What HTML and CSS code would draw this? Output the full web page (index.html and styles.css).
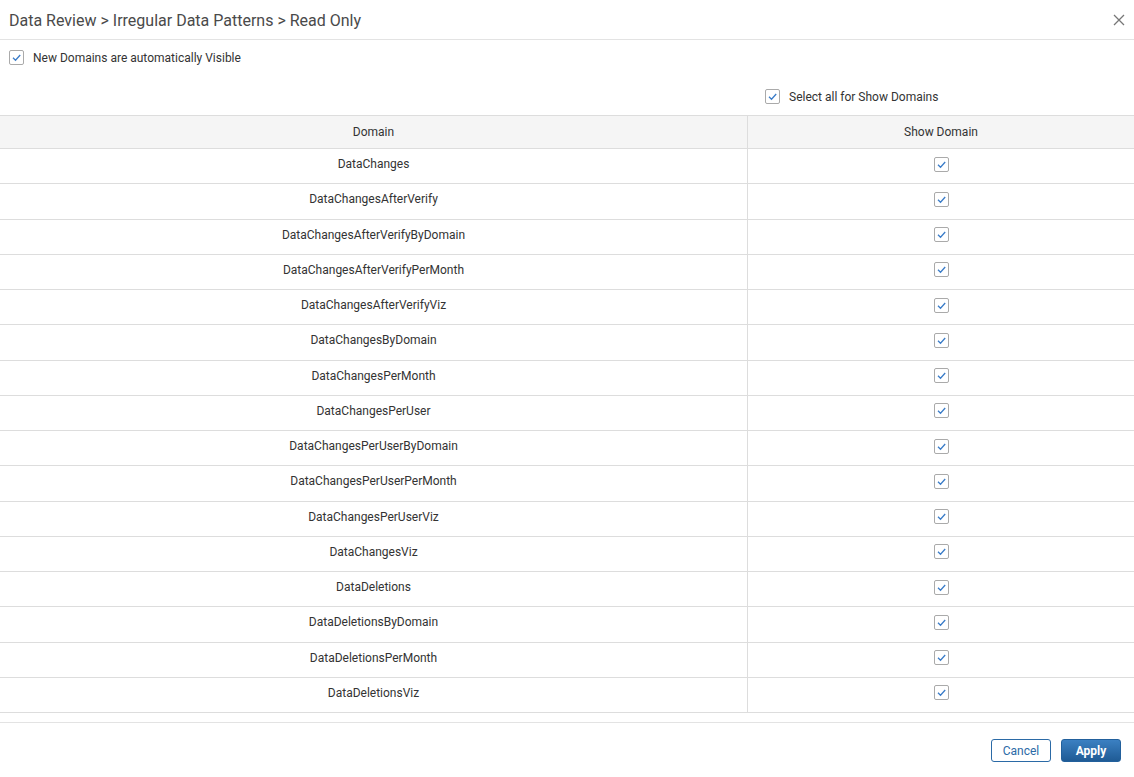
FILE: index.html
```html
<!DOCTYPE html>
<html>
<head>
<meta charset="utf-8">
<link rel="stylesheet" href="styles.css">
</head>
<body>
<div class="dialog">
  <div class="header">
    <div class="title">Data Review &gt; Irregular Data Patterns &gt; Read Only</div>
    <svg class="close" width="12" height="12" viewBox="0 0 12 12"><path d="M1 1 L11 11 M11 1 L1 11" stroke="#777" stroke-width="1.3" fill="none"/></svg>
  </div>
  <div class="opt">
    <span class="cb"><svg width="13" height="13" viewBox="0 0 13 13"><path d="M3 6.8 L5.5 9.2 L10.2 4" stroke="#3a7cc8" stroke-width="1.3" fill="none"/></svg></span>
    <span>New Domains are automatically Visible</span>
  </div>
  <div class="selall">
    <span class="cb"><svg width="13" height="13" viewBox="0 0 13 13"><path d="M3 6.8 L5.5 9.2 L10.2 4" stroke="#3a7cc8" stroke-width="1.3" fill="none"/></svg></span>
    <span>Select all for Show Domains</span>
  </div>
  <div class="table">
    <div class="row head"><div class="c1">Domain</div><div class="c2">Show Domain</div></div>
    <div id="rows"></div>
  </div>
  <div class="footer">
    <button class="btn cancel">Cancel</button>
    <button class="btn apply">Apply</button>
  </div>
</div>
<script>
var names=["DataChanges","DataChangesAfterVerify","DataChangesAfterVerifyByDomain","DataChangesAfterVerifyPerMonth","DataChangesAfterVerifyViz","DataChangesByDomain","DataChangesPerMonth","DataChangesPerUser","DataChangesPerUserByDomain","DataChangesPerUserPerMonth","DataChangesPerUserViz","DataChangesViz","DataDeletions","DataDeletionsByDomain","DataDeletionsPerMonth","DataDeletionsViz"];
var h="";
names.forEach(function(n){h+='<div class="row"><div class="c1">'+n+'</div><div class="c2"><span class="cb"><svg width="13" height="13" viewBox="0 0 13 13"><path d="M3 6.8 L5.5 9.2 L10.2 4" stroke="#3a7cc8" stroke-width="1.3" fill="none"/></svg></span></div></div>';});
document.getElementById("rows").innerHTML=h;
</script>
</body>
</html>
```
FILE: styles.css
```css
* { box-sizing: border-box; }
html, body { margin: 0; padding: 0; background: #fff; }
body { font-family: Roboto, "Liberation Sans", Arial, sans-serif; font-size: 12px; color: #333; }
.dialog { width: 1134px; height: 777px; display: flex; flex-direction: column; }
.header { height: 40px; border-bottom: 1px solid #e3e3e3; display: flex; align-items: center; justify-content: space-between; padding: 0 9px 0 9px; }
.title { font-size: 16px; color: #4a4a4a; padding-top: 1px; }
.cb { width: 15px; height: 15px; border: 1px solid #aaa; border-radius: 2px; display: inline-flex; align-items: center; justify-content: center; background: #fff; }
.opt { display: flex; align-items: center; gap: 9px; padding: 10px 0 0 9px; height: 25px; color: #333; }
.selall { display: flex; align-items: center; gap: 9px; padding: 0 0 0 765px; margin-top: 24px; height: 15px; }
.table { margin-top: 11px; border-top: 1px solid #ddd; }
.row { display: flex; height: 35.25px; border-bottom: 1px solid #ddd; }
.row.head { height: 33px; background: #f5f5f5; }
.c1 { width: 748px; border-right: 1px solid #ddd; display: flex; align-items: center; justify-content: center; padding-bottom: 4px; }
.c2 { flex: 1; display: flex; align-items: center; justify-content: center; padding-bottom: 4px; }
.row.head .c1, .row.head .c2 { padding-bottom: 1px; }
.footer { margin-top: 9px; border-top: 1px solid #e3e3e3; display: flex; justify-content: flex-end; gap: 10px; padding: 16px 13px 0 0; }
.btn { width: 60px; height: 23px; border-radius: 3px; font-family: Roboto, "Liberation Sans", Arial, sans-serif; font-size: 12px; padding: 0; cursor: pointer; }
.cancel { background: #fff; border: 1px solid #2b6aa6; color: #2b6aa6; }
.apply { background: linear-gradient(#3b80c2, #1f5b95); border: 1px solid #22609c; color: #fff; font-weight: bold; }
```
